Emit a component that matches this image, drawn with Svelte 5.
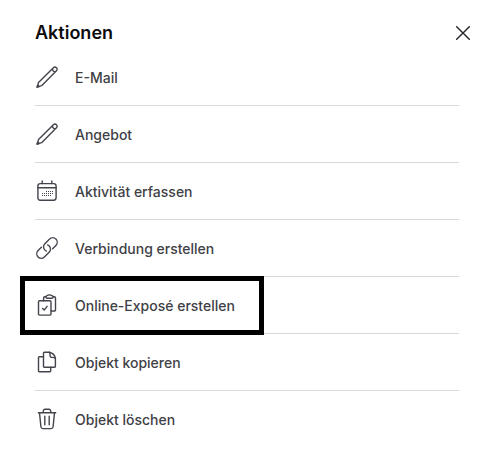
<script>
	const actions = [
		{ label: 'E-Mail', icon: 'pencil' },
		{ label: 'Angebot', icon: 'pencil' },
		{ label: 'Aktivität erfassen', icon: 'calendar' },
		{ label: 'Verbindung erstellen', icon: 'link' },
		{ label: 'Online-Exposé erstellen', icon: 'clipboard', highlighted: true },
		{ label: 'Objekt kopieren', icon: 'copy' },
		{ label: 'Objekt löschen', icon: 'trash' }
	];

	// day dots of the calendar icon
	const dots = [
		[11, 12], [13, 12], [15, 12], [17, 12],
		[7, 14], [9, 14], [11, 14], [13, 14], [15, 14], [17, 14],
		[7, 16], [9, 16], [11, 16], [13, 16], [15, 16]
	];
</script>

<div class="panel">
	<header>
		<h2>Aktionen</h2>
		<button class="close" aria-label="Schließen">
			<svg width="14" height="14" viewBox="0 0 14 14">
				<path d="M0.7 0.7L13.3 13.3M13.3 0.7L0.7 13.3" />
			</svg>
		</button>
	</header>

	<ul>
		{#each actions as action}
			<li class:highlighted={action.highlighted}>
				<button class="action">
					<svg width="24" height="24" viewBox="0 0 24 24">
						{#if action.icon === 'pencil'}
							<path
								d="M2.1 22.1L3.5 17.6L18.4 2.7a2.1 2.1 0 0 1 3 0l0.1 0.1a2.1 2.1 0 0 1 0 3L6.6 20.7ZM17.5 3.8C17.4 5.5 18.6 6.8 20.4 6.7"
							/>
							<path d="M2.1 22.1l0.6-2l1.4 1.4z" />
						{:else if action.icon === 'calendar'}
							<rect x="2.9" y="4.6" width="18.2" height="16.6" rx="2.4" />
							<path d="M2.9 8.8H21.1M7.2 2V4.6M16.8 2V4.6" />
							{#each dots as [x, y]}
								<rect class="dot" {x} {y} width="1" height="1" />
							{/each}
						{:else if action.icon === 'link'}
							<path
								d="M11.4 15.1A4.5 4.5 0 0 1 9.4 8.2L14.6 3.1A4.3 4.3 0 0 1 20.9 9.4L17.6 12.7"
							/>
							<path
								d="M12.6 8.9A4.5 4.5 0 0 1 14.6 15.8L9.4 20.9A4.3 4.3 0 0 1 3.1 14.6L6.4 11.3"
							/>
						{:else if action.icon === 'clipboard'}
							<rect x="3.5" y="7.7" width="12.5" height="14.4" rx="1" />
							<path d="M8.6 7.7V5a1.2 1.2 0 0 1 1.2-1.2h1M18.2 3.8h1.1a1.2 1.2 0 0 1 1.2 1.2v11.8a1.2 1.2 0 0 1-1.2 1.2H16" />
							<path d="M12.2 5.2a1.3 1.3 0 0 1 0-2.6C12.9 1.6 16.1 1.6 16.8 2.6a1.3 1.3 0 0 1 0 2.6z" />
							<path d="M7.6 15.4l1.6 1.7l2.9-3.8" />
						{:else if action.icon === 'copy'}
							<path d="M8.5 6.8H4.3a0.8 0.8 0 0 0-0.8 0.8V21a0.8 0.8 0 0 0 0.8 0.8H14.9a0.8 0.8 0 0 0 0.8-0.8V17.2" />
							<path d="M9.3 2.2H14.4C17.8 3 19.9 5.3 20.4 8.4V16.4a0.8 0.8 0 0 1-0.8 0.8H9.3a0.8 0.8 0 0 1-0.8-0.8V3a0.8 0.8 0 0 1 0.8-0.8Z" />
							<path d="M14.4 2.2C15.4 3.2 14.8 5 15.2 6.4C15.4 7.2 16 7.4 17 7.4C18.6 7.4 19.8 7.5 20.4 8.4" />
						{:else}
							<path d="M3.3 5.7H20.7M7.9 5.7L8.5 3.3a1.5 1.5 0 0 1 1.4-1.1h4.2a1.5 1.5 0 0 1 1.4 1.1l0.6 2.4" />
							<path d="M4.5 5.7l1.4 14.1a2 2 0 0 0 2 1.8h8.2a2 2 0 0 0 2-1.8l1.4-14.1" />
							<path d="M9.8 9.3V17.8M14.2 9.3V17.8" />
						{/if}
					</svg>
					<span>{action.label}</span>
				</button>
			</li>
		{/each}
	</ul>
</div>

<style>
	:global(body) {
		background: #fff;
	}

	.panel {
		box-sizing: border-box;
		height: 462px;
		padding: 0 22px 0 35px;
		font-family: Inter, 'Liberation Sans', sans-serif;
		background: #fff;
	}

	header {
		display: flex;
		align-items: center;
		justify-content: space-between;
		height: 33px;
		padding: 16px 0 0;
	}

	h2 {
		margin: 0;
		font-size: 18px;
		font-weight: 600;
		line-height: 24px;
		color: #0c0c0f;
	}

	button {
		padding: 0;
		border: 0;
		background: none;
		font: inherit;
		color: inherit;
	}

	.close {
		display: flex;
		padding: 1px;
		color: #252529;
	}

	ul {
		margin: 0 12px 0 0;
		padding: 0;
		list-style: none;
	}

	li {
		position: relative;
		border-bottom: 1px solid #d9d9d9;
	}

	li:last-child {
		border-bottom: 0;
	}

	/* frame lies over the dividers, so it takes no room in the list */
	.highlighted::after {
		content: '';
		position: absolute;
		top: -1px;
		left: -15px;
		box-sizing: border-box;
		width: 244px;
		height: 59px;
		border: 5px solid #000;
		z-index: 1;
		pointer-events: none;
	}

	.action {
		display: flex;
		align-items: center;
		gap: 16px;
		width: 100%;
		height: 56px;
		font-size: 14px;
		font-weight: 500;
		line-height: 20px;
		color: #3f3f46;
		text-align: left;
	}

	.action span {
		padding-top: 2px;
	}

	.action svg {
		color: #44444d;
	}

	svg {
		display: block;
		flex: none;
		fill: none;
		stroke: currentColor;
		stroke-width: 1.4;
		stroke-linecap: round;
		stroke-linejoin: round;
	}

	.dot {
		fill: currentColor;
		stroke: none;
	}
</style>
